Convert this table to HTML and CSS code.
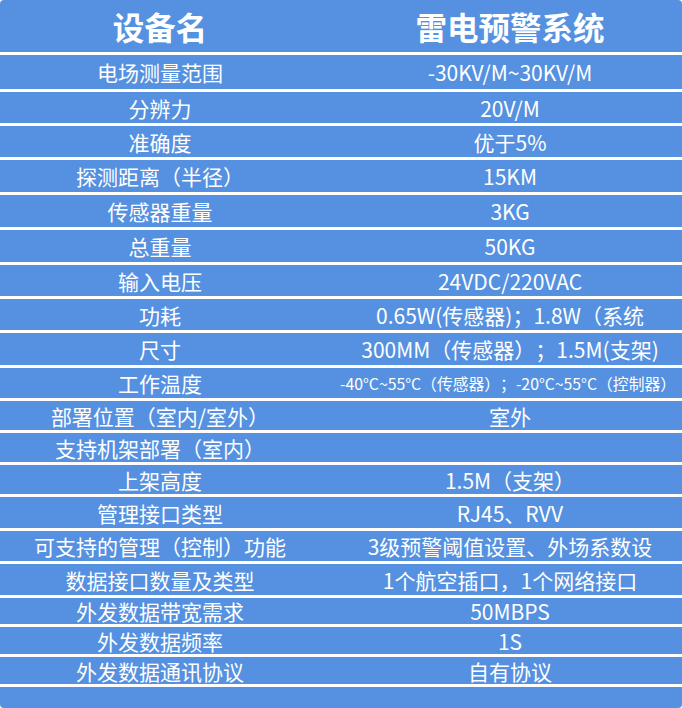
FILE: index.html
```html
<!DOCTYPE html>
<html lang="zh-CN">
<head>
<meta charset="utf-8">
<title>雷电预警系统</title>
<link rel="stylesheet" href="styles.css">
</head>
<body>
<div class="sheet">
  <div class="row head h52"><div class="cell">设备名</div><div class="cell right">雷电预警系统</div></div>
  <div class="row line h37"><div class="cell">电场测量范围</div><div class="cell right">-30KV/M~30KV/M</div></div>
  <div class="row line h34"><div class="cell">分辨力</div><div class="cell right">20V/M</div></div>
  <div class="row line h34"><div class="cell">准确度</div><div class="cell right">优于5%</div></div>
  <div class="row line h35"><div class="cell">探测距离（半径）</div><div class="cell right">15KM</div></div>
  <div class="row line h35"><div class="cell">传感器重量</div><div class="cell right">3KG</div></div>
  <div class="row line h35"><div class="cell">总重量</div><div class="cell right">50KG</div></div>
  <div class="row line h34"><div class="cell">输入电压</div><div class="cell right">24VDC/220VAC</div></div>
  <div class="row line h34"><div class="cell">功耗</div><div class="cell right">0.65W(传感器)；1.8W（系统</div></div>
  <div class="row line h35"><div class="cell">尺寸</div><div class="cell right">300MM（传感器）；1.5M(支架)</div></div>
  <div class="row line h33"><div class="cell">工作温度</div><div class="cell right small">-40°C~55°C（传感器）；-20°C~55°C（控制器）</div></div>
  <div class="row line h32"><div class="cell">部署位置（室内/室外）</div><div class="cell right">室外</div></div>
  <div class="row line h32"><div class="cell">支持机架部署（室内）</div><div class="cell right"></div></div>
  <div class="row line h32"><div class="cell">上架高度</div><div class="cell right">1.5M（支架）</div></div>
  <div class="row line h34"><div class="cell">管理接口类型</div><div class="cell right">RJ45、RVV</div></div>
  <div class="row line h33"><div class="cell">可支持的管理（控制）功能</div><div class="cell right">3级预警阈值设置、外场系数设</div></div>
  <div class="row line h34"><div class="cell">数据接口数量及类型</div><div class="cell right">1个航空插口，1个网络接口</div></div>
  <div class="row line h29"><div class="cell">外发数据带宽需求</div><div class="cell right">50MBPS</div></div>
  <div class="row line h30"><div class="cell">外发数据频率</div><div class="cell right">1S</div></div>
  <div class="row line h30"><div class="cell">外发数据通讯协议</div><div class="cell right">自有协议</div></div>
  <div class="row line h24"></div>
</div>
</body>
</html>
```
FILE: styles.css
```css
html, body {
  margin: 0;
  padding: 0;
  background: #ffffff;
}
.sheet {
  width: 682px;
  height: 708px;
  background: #5591e0;
  border-radius: 4px;
  overflow: hidden;
  color: #ffffff;
  font-family: "Noto Sans CJK SC", "Noto Sans", sans-serif;
  font-size: 21px;
  text-spacing-trim: space-all;
  box-sizing: border-box;
}
.row {
  display: grid;
  grid-template-columns: 320px 1fr;
  box-sizing: border-box;
}
.line {
  border-top: 3px solid #ffffff;
}
.cell {
  display: flex;
  align-items: center;
  justify-content: center;
  white-space: nowrap;
  line-height: 1;
  padding-top: 1px;
}
.right {
  padding-left: 18px;
}
.head {
  font-size: 31.5px;
  font-weight: 700;
}
.small {
  font-size: 15.8px;
  padding-left: 14px;
}
.h52 { height: 52px; }
.h37 { height: 37px; }
.h35 { height: 35px; }
.h34 { height: 34px; }
.h33 { height: 33px; }
.h32 { height: 32px; }
.h30 { height: 30px; }
.h29 { height: 29px; }
.h24 { height: 24px; }
```
